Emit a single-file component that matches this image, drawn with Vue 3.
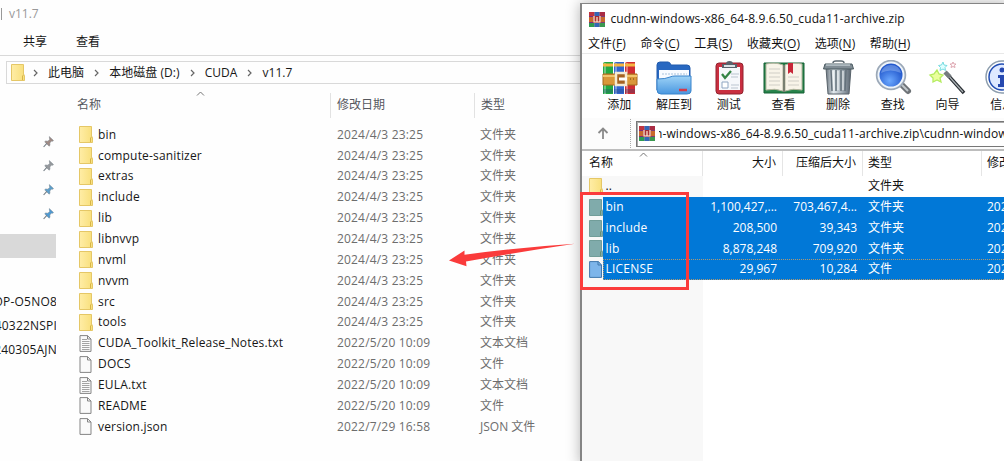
<script setup>
const folder = '文件夹'
const files = [
  ...['bin', 'compute-sanitizer', 'extras', 'include', 'lib', 'libnvvp', 'nvml', 'nvvm', 'src', 'tools'].map((name) => ({
    name, date: '2024/4/3 23:25', type: folder, icon: 'folder',
  })),
  { name: 'CUDA_Toolkit_Release_Notes.txt', date: '2022/5/20 10:09', type: '文本文档', icon: 'text' },
  { name: 'DOCS', date: '2022/5/20 10:09', type: '文件', icon: 'file' },
  { name: 'EULA.txt', date: '2022/5/20 10:09', type: '文本文档', icon: 'text' },
  { name: 'README', date: '2022/5/20 10:09', type: '文件', icon: 'file' },
  { name: 'version.json', date: '2022/7/29 16:58', type: 'JSON 文件', icon: 'file' },
]
const crumbs = ['此电脑', '本地磁盘 (D:)', 'CUDA', 'v11.7']
const pins = ['#a08a84', '#96999d', '#5c9fcc', '#4f9ad2']
const machines = ['OP-O5NO8', '40322NSPI', '240305AJN']
const menus = [['文件', 'F'], ['命令', 'C'], ['工具', 'S'], ['收藏夹', 'O'], ['选项', 'N'], ['帮助', 'H']]
const tools = [
  ['添加', 'add'], ['解压到', 'extract'], ['测试', 'test'], ['查看', 'view'],
  ['删除', 'trash'], ['查找', 'find'], ['向导', 'wizard'], ['信息', 'info'],
]
const entries = [
  { name: '..', size: '', packed: '', type: folder, date: '', icon: 'folder' },
  { name: 'bin', size: '1,100,427,...', packed: '703,467,4...', type: folder, date: '2023', icon: 'folder' },
  { name: 'include', size: '208,500', packed: '39,343', type: folder, date: '2023', icon: 'folder' },
  { name: 'lib', size: '8,878,248', packed: '709,920', type: folder, date: '2023', icon: 'folder' },
  { name: 'LICENSE', size: '29,967', packed: '10,284', type: '文件', date: '2023', icon: 'file' },
]
</script>

<template>
  <div class="desktop">
    <svg class="defs" width="0" height="0">
      <defs>
        <linearGradient id="gold" x2="1"><stop offset="0" stop-color="#ffeda6" /><stop offset="1" stop-color="#f8df7b" /></linearGradient>
        <linearGradient id="metal" x2="1"><stop offset="0" stop-color="#68737d" /><stop offset=".3" stop-color="#e2e9ed" /><stop offset=".65" stop-color="#a0abb4" /><stop offset="1" stop-color="#5a6570" /></linearGradient>
        <linearGradient id="sky" x2="0" y2="1"><stop offset="0" stop-color="#9ed3f7" /><stop offset="1" stop-color="#4a97df" /></linearGradient>
        <radialGradient id="lens" cx=".45" cy=".7"><stop offset="0" stop-color="#6ca9ff" /><stop offset="1" stop-color="#2359cd" /></radialGradient>
        <symbol id="folder" viewBox="0 0 14 17">
          <path d="M.5.5h12v10l1 1v5H.5z" fill="url(#gold)" stroke="#e5c766" />
          <path d="M11.5 16v-4l1.5-1.5" fill="none" stroke="#d7b548" />
        </symbol>
        <symbol id="folder-selected" viewBox="0 0 14 17">
          <path d="M.5.5h12v10l1 1v5H.5z" fill="#80abab" stroke="#719d99" />
          <path d="M11.5 16v-4l1.5-1.5" fill="none" stroke="#668f74" />
        </symbol>
        <symbol id="file" viewBox="0 0 14 17">
          <path d="M1 .6h7.5L12 4v12.4H1z" fill="#fafafa" stroke="#858585" />
          <path d="M8.5.6V4H12" fill="none" stroke="#858585" />
        </symbol>
        <symbol id="file-selected" viewBox="0 0 14 17">
          <path d="M.6.6h8.900L12.500 4v12.4H.6z" fill="#7db5ea" stroke="#4078ac" />
          <path d="M9 .6V4h3.500" fill="none" stroke="#4078ac" />
        </symbol>
        <symbol id="text" viewBox="0 0 14 17">
          <path d="M1 .6h7.5L12 4v12.4H1z" fill="#fafafa" stroke="#858585" />
          <path d="M8.5.6V4H12" fill="none" stroke="#858585" />
          <path d="M3 4.5h5M3 6.5h7.5M3 8.5h7.5M3 10.5h7.5M3 12.5h7.5M3 14.5h7.5" stroke="#999" stroke-width=".9" />
        </symbol>
        <symbol id="rar" viewBox="0 0 16 15">
          <path d="M0 0h5.3v15H0z" fill="#7b2b80" /><path d="M5.3 0h5.4v15H5.3z" fill="#3466b5" /><path d="M10.7 0H16v15h-5.3z" fill="#7b3d78" />
          <path d="M0 0h5.3v4H0z" fill="#c03440" /><path d="M10.700 0H16v4h-5.300z" fill="#a92c44" /><path d="M0 11h5.3v4H0z" fill="#2e9a51" /><path d="M10.7 11H16v4h-5.3z" fill="#3b9850" />
          <path d="M0 5h16v5H0z" fill="#c9692c" /><path d="M4 4h8v7H4z" fill="#a82d34" />
          <path d="M5 4v6h6V4M8 5v5" fill="none" stroke="#fff1d8" stroke-width="1.200" />
        </symbol>
      </defs>
    </svg>

    <section class="explorer">
      <div class="caption"><i></i>v11.7</div>
      <div class="tabs"><span>共享</span><span>查看</span></div>
      <div class="address">
        <svg class="icon" width="14" height="17"><use href="#folder" /></svg>
        <template v-for="c in crumbs" :key="c">
          <svg class="chev" width="5" height="8"><path d="M1 1l3 3-3 3" /></svg><span>{{ c }}</span>
        </template>
      </div>
      <div class="body">
        <aside>
          <div class="pins">
            <svg v-for="p in pins" :key="p" width="11" height="12" viewBox="0 0 11 12">
              <path d="M6.3.6l4.2 4-1 .7-.9-.2-1.8 1.8.2 2.4-.9.9-4.4-4.4.9-.8 2.3.2L6.7 3.400l-.2-.9z" :fill="p" stroke="#75808a" stroke-width=".5" />
              <path d="M3.800 7.400L.6 11" stroke="#707980" stroke-width="1.1" />
            </svg>
          </div>
          <div class="current"></div>
          <div class="machines"><div v-for="m in machines" :key="m"><span>{{ m }}</span></div></div>
        </aside>
        <div class="list">
          <div class="row head">
            <span>名称<svg class="sort" width="9" height="5"><path d="M1 4.500L4.500 1 8 4.500" /></svg></span><span>修改日期</span><span>类型</span>
          </div>
          <div v-for="f in files" :key="f.name" class="row item">
            <span class="name"><svg class="icon" width="14" height="17"><use :href="'#' + f.icon" /></svg><b>{{ f.name }}</b></span>
            <span class="date">{{ f.date }}</span><span class="kind">{{ f.type }}</span>
          </div>
        </div>
      </div>
    </section>

    <section class="winrar">
      <div class="title"><svg width="16" height="15"><use href="#rar" /></svg><span>cudnn-windows-x86_64-8.9.6.50_cuda11-archive.zip</span></div>
      <nav><span v-for="m in menus" :key="m[1]">{{ m[0] }}(<u>{{ m[1] }}</u>)</span></nav>
      <div class="toolbar">
        <div v-for="t in tools" :key="t[1]" class="tool">
          <svg width="42" height="36" viewBox="0 0 42 36">
            <g v-if="t[1] === 'add'">
              <path d="M4 4q0-2 2-2h8v32H4z" fill="#23a943" /><path d="M15 4q0-2 2-2h8v32H15z" fill="#3266cf" /><path d="M26 4q0-2 2-2h8v32H26z" fill="#d02c33" />
              <path d="M6 3v31M17 3v31M28 3v31" stroke="#fff" stroke-opacity=".35" stroke-width="2" />
              <path d="M4 5h10M15 5h10M26 5h10" stroke="#f5b541" stroke-width="3" />
              <path d="M4 31h10M15 31h10M26 31h10" stroke="#24477b" stroke-opacity=".3" stroke-width="4" />
              <path d="M4 14h34v11H4z" fill="#d99739" stroke="#a8691f" /><path d="M4 16h34" stroke="#f1c56d" stroke-width="2" />
              <path d="M17 13h10v12H17z" fill="#a66221" stroke="#f4ead2" stroke-width="2.500" /><path d="M20 19h8" stroke="#fff" stroke-width="3" />
              <path d="M31 19h1M34 19h1" stroke="#684018" />
            </g>
            <g v-else-if="t[1] === 'extract'">
              <path d="M3 30V5q0-3 3-3h8q2 0 3 3h16q3 0 3 3v22z" fill="#2868c1" stroke="#205aad" />
              <path d="M5 10h30v15H5z" fill="#f8fbff" /><path d="M8 14h25" stroke="#a9c3dd" stroke-dasharray="2 1" />
              <path d="M3 19q9 0 13-2 2-1 5-1h16v15q0 3-4 3H7q-4 0-4-4z" fill="url(#sky)" stroke="#3984cc" /><path d="M25 30h8" stroke="#d53948" stroke-width="2.500" />
            </g>
            <g v-else-if="t[1] === 'test'">
              <rect x="7" y="3" width="27" height="31" rx="3" fill="#c92f40" stroke="#92232e" />
              <path d="M10 7h21v23H10z" fill="#f6f8fb" /><path d="M13 8V4h4q0-3 3.500-3T24 4h4v4z" fill="#58636d" /><path d="M15 6h11" stroke="#dce2e6" stroke-width="2" />
              <path d="M13 14l3 4 6-7" fill="none" stroke="#348445" stroke-width="2.300" /><path d="M22 14h8M22 17h7M22 25h8M22 28h7" stroke="#bbc5d0" />
              <path d="M13 22h6v6h-6z" fill="#fff" stroke="#8fa6c2" />
            </g>
            <g v-else-if="t[1] === 'view'">
              <path d="M1 3h40v30H1z" fill="#27834b" stroke="#146135" />
              <path d="M3 4q10-2 17 1v26q-8-3-17-1zM39 4q-10-2-17 1v26q8-3 17-1z" fill="#f8f4e9" stroke="#b6b59f" /><path d="M21 5v27" stroke="#787f71" stroke-width="2" />
              <path d="M6 9h11M6 13h11M6 17h11M6 21h11M6 25h11M25 17h11M25 21h11M25 25h11" stroke="#d0cec6" /><path d="M25 3h5v11l-2.500-2L25 14z" fill="#c72738" />
            </g>
            <g v-else-if="t[1] === 'trash'">
              <path d="M8 8h25l-2 26H10z" fill="url(#metal)" stroke="#59636b" />
              <path d="M13 10l1 21M18 10v21M23 10v21M28 10l-1 21" stroke="#64717b" stroke-width="1.500" /><path d="M15 11l1 19M20 11v19M25 11v19" stroke="#f4f7f8" />
              <path d="M7 4h27l1.500 5h-30z" fill="#818d95" stroke="#4b5a61" /><path d="M8 5h24" stroke="#dbe6ea" /><path d="M15 3q0-2 3-2h5q3 0 3 2" fill="none" stroke="#5f6b73" stroke-width="1.500" />
            </g>
            <g v-else-if="t[1] === 'find'">
              <path d="M28 24l7 7" stroke="#6e7377" stroke-width="6" stroke-linecap="round" /><path d="M28 24l7 7" stroke="#c1c8cb" stroke-width="2" />
              <circle cx="18" cy="15" r="14" fill="url(#lens)" stroke="#9ca9b8" stroke-width="2.500" /><circle cx="18" cy="15" r="12.500" fill="none" stroke="#eef4fa" stroke-width="2" />
              <path d="M8 13Q10 5 18 5t10 8Q17 8 8 13" fill="#c2ddff" fill-opacity=".35" />
            </g>
            <g v-else-if="t[1] === 'wizard'">
              <path d="M19 13l18 20" stroke="#282d32" stroke-width="3.500" /><path d="M19 13l17 19" stroke="#abb2b5" stroke-width="1.200" /><path d="M18 12l5 5" stroke="#757c7f" stroke-width="4.500" />
              <path d="M10 10l2 4 4 1-3 3 1 4-4-2-4 2v-4l-3-3 4-1z" fill="#eaff9d" stroke="#b5ec60" stroke-width="1.300" />
              <path d="M16 2l1 3 3 .5-2 2 .5 3-2.500-1.500-3 1.500.5-3-2-2 3-.5z" fill="#dfffff" stroke="#79dce1" /><path d="M26 2l1 2h2l-1.500 1.500.5 2-2-1-2 1 .5-2L23 4h2z" fill="#fff4f6" stroke="#dda8b2" />
            </g>
            <g v-else>
              <circle cx="20" cy="17" r="16" fill="#fff" stroke="#8c9dad" stroke-width="1.500" /><circle cx="20" cy="17" r="13" fill="#dee9ff" stroke="#214db3" stroke-width="1.500" />
              <circle cx="20" cy="10" r="2.500" fill="#2548b0" /><path d="M16 15h6v9h3v3h-9v-3h2v-6h-2z" fill="#2548b0" />
            </g>
          </svg>
          <span>{{ t[0] }}</span>
        </div>
      </div>
      <div class="path">
        <svg class="up" width="12" height="13"><path d="M6 12V2M1.500 6L6 1.500 10.500 6" /></svg>
        <i class="grip"></i>
        <div class="field"><svg width="16" height="15"><use href="#rar" /></svg><div class="crop"><span>n-windows-x86_64-8.9.6.50_cuda11-archive.zip\cudnn-windows</span></div></div>
      </div>
      <div class="archive">
        <div class="arow ahead"><span>名称<svg class="sort" width="9" height="5"><path d="M1 4.500L4.500 1 8 4.500" /></svg></span><span class="num">大小</span><span class="num">压缩后大小</span><span>类型</span><span>修改时间</span></div>
        <div class="entries">
          <div v-for="e in entries" :key="e.name" class="arow" :class="{ selected: e.size, focus: e.icon === 'file' }">
            <span class="aname"><svg class="icon" width="14" height="17"><use :href="'#' + e.icon + (e.size ? '-selected' : '')" /></svg><b>{{ e.name }}</b></span>
            <span class="num">{{ e.size }}</span><span class="num">{{ e.packed }}</span><span>{{ e.type }}</span><span>{{ e.date }}</span>
          </div>
        </div>
      </div>
    </section>

    <div class="callout"></div>
    <svg class="arrow" width="128" height="28"><path d="M0 17.500L15.500 7.500v4.200Q69 4.500 126 .8Q70 9 17 18.500l.5 4.800z" /></svg>
  </div>
</template>

<style>
html, body { margin: 0; overflow: hidden; }
</style>

<style scoped>
.desktop { position: relative; width: 1004px; height: 461px; overflow: hidden; background: #fefefe; color: #171717; font: 12px/20px "Open Sans", "Noto Sans CJK SC", sans-serif; white-space: nowrap; }
.desktop * { box-sizing: border-box; }
.defs { position: absolute; }
svg { flex: none; display: block; }
b { font-weight: 400; }
.explorer { width: 581px; height: 461px; overflow: hidden; }
.caption { display: flex; align-items: center; height: 28px; color: #999; gap: 7px; }
.caption i { width: 2px; height: 12px; border-right: 1px solid #999; }
.tabs { height: 28px; display: flex; gap: 29px; padding: 4px 0 0 23px; border-bottom: 1px solid #d9d9d9; }
.address { height: 23px; margin: 5px 0 0 6px; display: flex; align-items: center; border: 1px solid #d9d9d9; border-right: 0; padding-left: 4px; }
.address span { line-height: 19px; margin-bottom: 1px; letter-spacing: .05px; }
.chev { margin: 0 10px; }
.address .icon + .chev { margin-left: 8px; }
.chev path { fill: none; stroke: #666; stroke-width: 1.200; }
.body { display: flex; }
aside { width: 77px; flex: none; padding-top: 52px; }
.pins { display: flex; flex-direction: column; gap: 12px; padding-left: 43px; }
.current { width: 56px; height: 24px; margin-top: 14px; background: #d9d9d9; }
.machines { margin-top: 32px; width: 56px; overflow: hidden; letter-spacing: .2px; }
.machines div { height: 24px; width: 57px; display: flex; justify-content: flex-end; align-items: center; }
.list { flex: 1; padding-top: 9px; }
.row { display: grid; grid-template-columns: 253px 144px 1fr; height: 20.870px; align-items: center; }
.head { height: 25px; margin-bottom: 6.300px; color: #56585e; }
.head > span { height: 25px; line-height: 23px; position: relative; }
.head > span + span { border-left: 1px solid #e2e2e2; padding-left: 6px; }
.item > .date, .item > .kind { padding-left: 7px; color: #6d6d6d; }
.item > .kind { padding-left: 6px; }
.item .date { letter-spacing: .18px; }
.name { display: flex; align-items: center; padding-left: 2px; gap: 5px; letter-spacing: .17px; }
.sort { position: absolute; left: 119px; top: -2px; }
.sort path { fill: none; stroke: #777; }
.winrar { position: absolute; left: 580px; top: 3px; width: 430px; height: 462px; background: #fff; border: 2px solid #858585; border-top-width: 1px; box-shadow: 0 0 13px rgba(0, 0, 0, .3); color: #111; }
.title { height: 30px; display: flex; align-items: center; padding-left: 7px; gap: 5.500px; letter-spacing: .125px; }
nav { height: 19px; line-height: 20px; display: flex; gap: 14.500px; padding-left: 6px; letter-spacing: .12px; }
u { text-underline-offset: 2px; }
.toolbar { height: 65px; border-top: 1px solid #e8e8e8; display: flex; padding: 6px 0 0 10px; }
.tool { width: 54.700px; flex: none; display: flex; flex-direction: column; align-items: center; }
.tool svg { margin-left: 2px; }
.tool span { line-height: 18px; }
.path { height: 33px; display: flex; align-items: center; border-bottom: 2px solid #bdbdbd; background: #fcfcfc; }
.up { margin: 0 21px 0 15px; }
.up path { fill: none; stroke: #8a8a8a; stroke-width: 1.800; }
.grip { height: 29px; width: 1px; margin-right: 5px; border-left: 1px dotted #aaa; }
.field { flex: 1; height: 26px; border: 1px solid #777; display: flex; align-items: center; padding-left: 2px; gap: 4px; background: #fff; box-shadow: inset 1px 1px #aaa; }
.crop { overflow: hidden; }
.crop span { margin-left: -4px; letter-spacing: .09px; }
.arow { display: grid; grid-template-columns: 121px 80px 80px 119px 1fr; height: 20.850px; line-height: 20.850px; width: 424px; }
.arow > span { padding-left: 5px; position: relative; }
.arow > .num { text-align: right; padding: 0 6px 0 0; }
.ahead { height: 25px; line-height: 24px; }
.ahead > span { border-right: 1px solid #e5e5e5; }
.ahead > span:first-child { padding-left: 7px; }
.ahead .sort { left: 57px; top: 1px; }
.entries { height: 290px; background: linear-gradient(90deg, #f8f8f8 121px, #fff 121px); }
.arow > .aname { display: flex; align-items: center; padding-left: 7px; gap: 2.500px; letter-spacing: .2px; }
.selected { color: #fff; background: linear-gradient(90deg, transparent 21px, #0178d7 21px); }
.focus { position: relative; }
.focus::after { content: ""; position: absolute; left: 21px; right: 0; top: 0; bottom: 0; border: 1px dotted #b09872; }
.callout { position: absolute; left: 580px; top: 192px; width: 109px; height: 98px; border: 3px solid #fb3b3b; }
.arrow { position: absolute; left: 449px; top: 243px; }
.arrow path { fill: #fa3b3b; }
</style>
